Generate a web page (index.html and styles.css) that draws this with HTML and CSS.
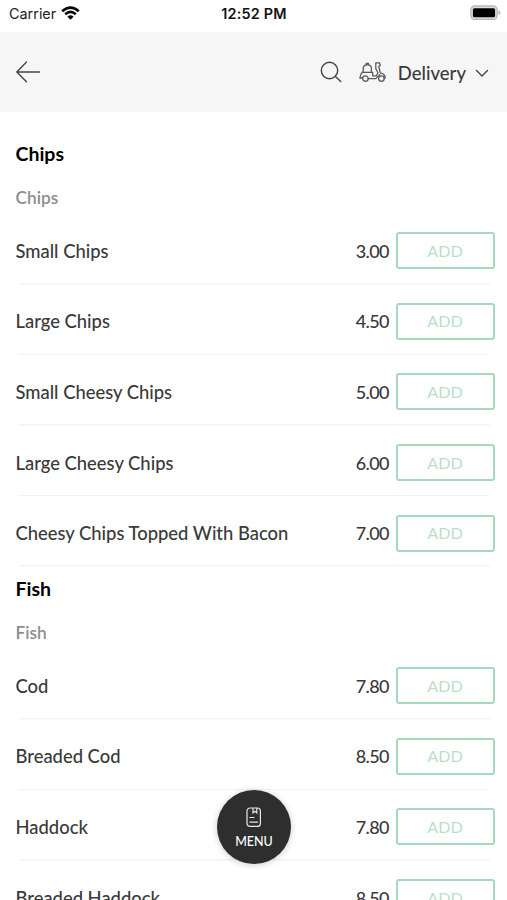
FILE: index.html
```html
<!DOCTYPE html>
<html lang="en">
<head>
<meta charset="utf-8">
<title>Menu</title>
<link rel="stylesheet" href="styles.css">
</head>
<body>
<div class="screen">
  <div class="status">
    <div class="carrier"><span>Carrier</span>
      <svg class="wifi" width="19" height="14" viewBox="0 0 19 14" fill="none" stroke="#080808" stroke-width="2.6"><path d="M1.2 5.2Q9.5-2 17.8 5.2"/><path d="M4.2 8.3Q9.5 3.6 14.8 8.3"/><path d="M9.5 13.8L6.4 10.7Q9.5 8 12.6 10.7Z" fill="#080808" stroke="none"/></svg>
    </div>
    <div class="time">12:52 PM</div>
    <svg class="battery" width="31" height="16" viewBox="0 0 31 16"><rect x=".8" y="1" width="26.400" height="13.400" rx="4" fill="#ddd" stroke="#b9b9b9" stroke-width="1.300"/><rect x="2.900" y="3.200" width="22.200" height="9" rx="1.500" fill="#000"/><path d="M28.500 5.300q2 1 2 2.400t-2 2.400z" fill="#b5b5b5"/></svg>
  </div>
  <header class="bar">
    <svg class="back" width="26" height="24" viewBox="0 0 26 24"><path d="M24.500 12H1.800M11.500 2L1.800 12l9.700 9.800"/></svg>
    <svg class="search" width="22" height="22" viewBox="0 0 22 22"><circle cx="9.500" cy="9.500" r="8.200"/><path d="M15.400 15.400l5.300 5.100"/></svg>
    <svg class="scooter" width="28" height="22" viewBox="0 0 28 22"><path d="M4.200 11V7.800Q4.200 3.800 8.300 3.800T12.400 7.800V11M7.200 3.800V2.300h2.200v1.500M3.400 11.300h10.300v3.600h3.600L19 11.800 16.800 7.800V1.800h3.600l.9 2.500-1.500 1.300 1.500 6.200q4.700 1 5 5h-1.200M3.400 11.300Q1 13.500.9 17h2.700M9.200 17.600h7.600l4-3.800"/><circle cx="6.400" cy="17.600" r="2.800"/><circle cx="22.400" cy="17.600" r="2.800"/></svg>
    <span class="mode">Delivery</span>
    <svg class="chev" width="14" height="9" viewBox="0 0 14 9"><path d="M1.500 1.500L7 7l5.500-5.500"/></svg>
  </header>
  <main>
    <section>
      <h2>Chips</h2>
      <h3>Chips</h3>
      <div class="row"><span class="name">Small Chips</span><span class="price">3.00</span><button>ADD</button></div>
      <div class="row"><span class="name">Large Chips</span><span class="price">4.50</span><button>ADD</button></div>
      <div class="row"><span class="name">Small Cheesy Chips</span><span class="price">5.00</span><button>ADD</button></div>
      <div class="row"><span class="name">Large Cheesy Chips</span><span class="price">6.00</span><button>ADD</button></div>
      <div class="row"><span class="name">Cheesy Chips Topped With Bacon</span><span class="price">7.00</span><button>ADD</button></div>
    </section>
    <section>
      <h2>Fish</h2>
      <h3>Fish</h3>
      <div class="row"><span class="name">Cod</span><span class="price">7.80</span><button>ADD</button></div>
      <div class="row"><span class="name">Breaded Cod</span><span class="price">8.50</span><button>ADD</button></div>
      <div class="row"><span class="name">Haddock</span><span class="price">7.80</span><button>ADD</button></div>
      <div class="row"><span class="name">Breaded Haddock</span><span class="price">8.50</span><button>ADD</button></div>
    </section>
  </main>
  <div class="fab">
    <svg width="16" height="21" viewBox="0 0 16 21"><rect x="1" y="1" width="13.400" height="18.400" rx="3"/><path d="M7 1v5l1.900-1.600L10.800 6V1M3.500 10.500h5M3.500 15.200h8.500"/></svg>
    <span>MENU</span>
  </div>
</div>
</body>
</html>
```

FILE: styles.css
```css
* { box-sizing: border-box; }
body { margin: 0; background: #fff; font-family: Lato, sans-serif; color: #3a3a3a; }
.screen { position: relative; width: 507px; height: 900px; overflow: hidden; }
.status { display: grid; grid-template-columns: 1fr auto 1fr; align-items: center; height: 32px; padding: 0 6px 5px 9px; font-family: Inter, sans-serif; font-size: 14.400px; color: #222; }
.carrier { display: flex; align-items: center; gap: 5px; }
.wifi { margin-top: -1px; }
.time { font-weight: 600; color: #111; letter-spacing: .2px; margin-left: -2px; }
.battery { justify-self: end; margin-top: -1px; }
.bar { display: flex; align-items: center; height: 80px; padding: 0 18px 0 15px; background: #f6f6f6; }
.bar svg { fill: none; stroke: #444; stroke-width: 1.400; stroke-linecap: round; stroke-linejoin: round; }
.search { margin-left: auto; }
.bar .scooter { margin-left: 17px; stroke-width: 1.300; stroke: #5a5a5a; }
.mode { margin: 2px 0 0 10.500px; font-size: 18.500px; font-weight: 500; }
.chev { margin-left: 9px; margin-top: 3px; }
main { padding-top: 20px; }
h2, h3 { margin: 0; padding-left: 15.500px; }
h2 { height: 45px; line-height: 44px; font-size: 19.500px; font-weight: 700; color: #000; }
h3 { height: 37px; line-height: 42px; font-size: 17.300px; font-weight: 600; color: #8e8e8e; }
.row { display: flex; align-items: center; height: 70.600px; padding: 3px 12.500px 0 15.500px; font-size: 18.400px; font-weight: 500; background: linear-gradient(#f3f3f3, #f3f3f3) 19px 100% / 471px 1.500px no-repeat; }
.name { flex: 1; }
.price { font-weight: 500; font-size: 18px; letter-spacing: -.6px; margin-right: -.6px; }
button { width: 99px; height: 37px; margin-left: 7.200px; padding: 0 0 1px; border: 2px solid #a8d8bd; border-radius: 3px; background: #fff; color: #b9dfca; font: 400 16.200px Lato, sans-serif; }
.fab { position: absolute; left: 217px; top: 790px; width: 74px; height: 74px; border-radius: 50%; background: #2e2e2e; box-shadow: 0 1px 7px rgba(0,0,0,.2); display: flex; flex-direction: column; align-items: center; padding-top: 17px; color: #fff; font-size: 12.500px; font-weight: 500; }
.fab svg { fill: none; stroke: #e8e8e8; stroke-width: 1.200; }
.fab span { margin-top: 6px; }
```
